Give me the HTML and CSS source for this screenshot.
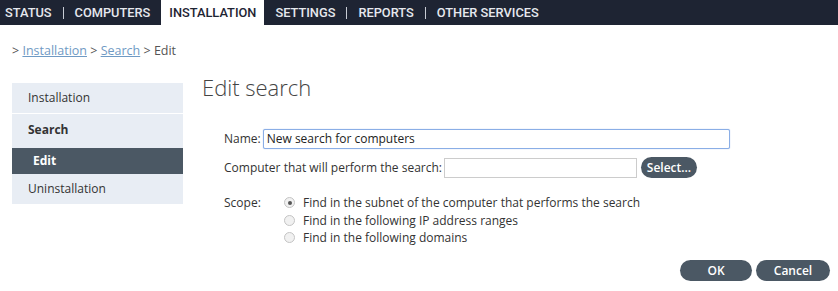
FILE: index.html
```html
<!DOCTYPE html>
<html lang="en">

<head>
    <meta charset="UTF-8">
    <title>Edit search</title>
    <link rel="stylesheet" href="styles.css">
</head>

<body>
    <!-- Top menu -->
    <div class="topnav">
        <a class="tab first">STATUS</a><span class="sep"></span>
        <a class="tab">COMPUTERS</a>
        <a class="tab active">INSTALLATION</a>
        <a class="tab">SETTINGS</a><span class="sep"></span>
        <a class="tab">REPORTS</a><span class="sep"></span>
        <a class="tab">OTHER SERVICES</a>
    </div>

    <div class="breadcrumb">
        &gt; <a href="#">Installation</a> &gt; <a href="#">Search</a> &gt; Edit
    </div>

    <div class="page">
        <!-- Side menu -->
        <div class="sidemenu">
            <div class="item">Installation</div>
            <div class="item bold">Search</div>
            <div class="item sub">Edit</div>
            <div class="item">Uninstallation</div>
        </div>

        <div class="content">
            <h1>Edit search</h1>

            <div class="row">
                <label>Name:</label>
                <input class="name-input" type="text" value="New search for computers">
            </div>
            <div class="row">
                <label>Computer that will perform the search:</label>
                <input class="computer-input" type="text">
                <button class="btn small">Select...</button>
            </div>

            <div class="scope">
                <span class="scope-label">Scope:</span>
                <div class="options">
                    <label><span class="radio checked"></span>Find in the subnet of the computer that performs the search</label>
                    <label><span class="radio"></span>Find in the following IP address ranges</label>
                    <label><span class="radio"></span>Find in the following domains</label>
                </div>
            </div>

            <div class="actions">
                <button class="btn">OK</button>
                <button class="btn">Cancel</button>
            </div>
        </div>
    </div>
</body>

</html>
```

FILE: styles.css
```css
body {
    font-family: "Open Sans", "Liberation Sans", sans-serif;
    font-size: 12px;
    color: #333;
    background: #fff;
    margin: 0;
}

.topnav {
    display: flex;
    align-items: center;
    height: 25px;
    background: #1e2433;
}

.tab {
    font-family: Roboto, sans-serif;
    font-weight: 500;
    color: #e6e8ee;
    font-size: 12.8px;
    padding: 0 11px;
    line-height: 25px;
}

.tab.first {
    padding-left: 5px;
}

.tab.active {
    background: #fff;
    color: #1e2433;
    padding: 0 8px;
}

.sep {
    width: 1px;
    height: 12px;
    background: #c8ccd4;
}

.breadcrumb {
    padding: 17px 0 0 12px;
    height: 41px;
    line-height: 17px;
    color: #555;
    font-size: 12.5px;
}

.breadcrumb a {
    color: #6f9ac4;
}

.page {
    display: flex;
    align-items: flex-start;
    padding-left: 12px;
}

.sidemenu {
    width: 171px;
    background: #e8edf4;
}

.sidemenu .item {
    height: 30px;
    line-height: 30px;
    padding-left: 16px;
    border-bottom: 1px solid #fff;
    color: #333;
}

.sidemenu .item:last-child {
    border-bottom: none;
}

.sidemenu .bold {
    font-weight: bold;
    height: 34px;
    line-height: 32px;
    border-bottom: none;
}

.sidemenu .sub {
    background: #4b5864;
    color: #fff;
    font-weight: bold;
    height: 26px;
    line-height: 25px;
    padding-left: 21px;
    border-bottom: none;
}

.content {
    flex: 1;
    padding-left: 19px;
    padding-right: 8px;
}

h1 {
    font-weight: 300;
    font-size: 22px;
    line-height: 30px;
    color: #444;
    margin: -11px 0 26px 0;
}

.row {
    display: flex;
    align-items: center;
    height: 21px;
    margin-left: 22px;
    margin-bottom: 8px;
}

.row label {
    margin-right: 2px;
}

input {
    font-family: inherit;
    font-size: 12px;
    height: 20px;
    box-sizing: border-box;
    border: 1px solid #ccc;
    padding: 0 3px;
    color: #222;
}

.name-input {
    width: 467px;
    border: 1px solid #8aaee6;
    border-radius: 2px;
    box-shadow: 0 0 1px #8aaee6;
}

.computer-input {
    width: 193px;
}

.btn {
    font-family: inherit;
    font-size: 12px;
    font-weight: 600;
    color: #fff;
    background: #4b5864;
    border: none;
    border-radius: 11px;
    height: 21px;
    padding: 0 8px;
}

.btn.small {
    margin-left: 4px;
    width: 56px;
    padding: 0;
}

.scope {
    display: flex;
    margin-left: 22px;
    margin-top: 16px;
}

.scope-label {
    width: 60px;
    line-height: 17.5px;
}

.options label {
    display: flex;
    align-items: center;
    height: 17.5px;
}

.radio {
    width: 9px;
    height: 9px;
    border: 1px solid #c4c4c4;
    border-radius: 50%;
    background: #f1f1f1;
    margin-right: 8px;
    position: relative;
}

.radio.checked::after {
    content: "";
    position: absolute;
    left: 2.5px;
    top: 2.5px;
    width: 4px;
    height: 4px;
    border-radius: 50%;
    background: #555;
}

.actions {
    display: flex;
    justify-content: flex-end;
    gap: 4px;
    margin-top: 13px;
}

.actions .btn {
    width: 72px;
}

.actions .btn:last-child {
    width: 74px;
}
```
